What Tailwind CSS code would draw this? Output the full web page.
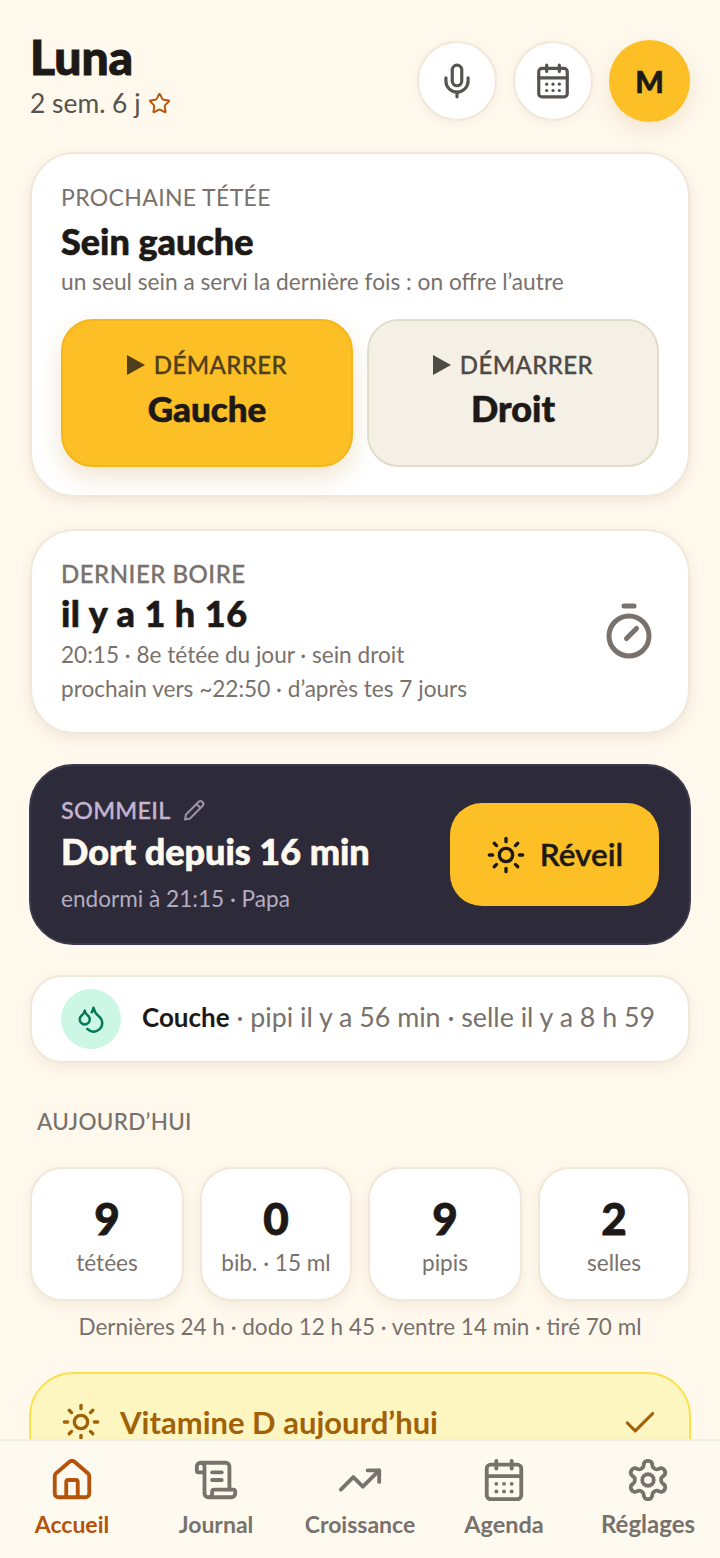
<!DOCTYPE html>
<html lang="fr">
  <head>
    <meta charset="UTF-8">
    <meta name="viewport" content="width=device-width, initial-scale=1.0">
    <title>Luna</title>
    <script src="https://cdn.jsdelivr.net/npm/@tailwindcss/browser@4"></script>
  </head>
  <body class="font-['Lato','Noto_Sans',sans-serif] bg-[#fef8ed] text-[#1c1917] h-[1558px] overflow-hidden relative">

    <main class="px-[30px] pt-[40px] flex flex-col">
      <header class="flex justify-between items-start h-[82px]">
        <div>
          <h1 class="text-[48px] leading-[38px] font-black -mt-[2px] [-webkit-text-stroke:1px_currentColor]">Luna</h1>
          <p class="flex items-center gap-[7px] text-[26.4px] leading-[34px] text-[#57534e] mt-[10px]">2 sem. 6 j
            <svg class="w-[23px] h-[23px] text-[#b45309]" viewBox="0 0 24 24" fill="none" stroke="currentColor" stroke-width="2" stroke-linecap="round" stroke-linejoin="round"><path d="M11.525 2.295a.53.53 0 0 1 .95 0l2.31 4.679a2.123 2.123 0 0 0 1.595 1.16l5.166.756a.53.53 0 0 1 .294.904l-3.736 3.638a2.123 2.123 0 0 0-.611 1.878l.882 5.14a.53.53 0 0 1-.771.56l-4.618-2.428a2.122 2.122 0 0 0-1.973 0L6.396 21.01a.53.53 0 0 1-.77-.56l.881-5.139a2.122 2.122 0 0 0-.611-1.879L2.16 9.795a.53.53 0 0 1 .294-.906l5.165-.755a2.122 2.122 0 0 0 1.597-1.16z"/></svg>
          </p>
        </div>
        <div class="flex items-center gap-[16px] h-[82px]">
          <button class="w-[80px] h-[80px] rounded-full bg-white border-2 border-[#f0e8d8] shadow-[0_2px_8px_rgba(120,90,30,0.06)] flex items-center justify-center text-[#57534e]" aria-label="Micro">
            <svg class="w-[38px] h-[38px]" viewBox="0 0 24 24" fill="none" stroke="currentColor" stroke-width="2" stroke-linecap="round" stroke-linejoin="round"><path d="M12 19v3"/><path d="M19 10v2a7 7 0 0 1-14 0v-2"/><rect x="9" y="2" width="6" height="13" rx="3"/></svg>
          </button>
          <button class="w-[80px] h-[80px] rounded-full bg-white border-2 border-[#f0e8d8] shadow-[0_2px_8px_rgba(120,90,30,0.06)] flex items-center justify-center text-[#57534e]" aria-label="Agenda">
            <svg class="w-[38px] h-[38px]" viewBox="0 0 24 24" fill="none" stroke="currentColor" stroke-width="2" stroke-linecap="round" stroke-linejoin="round"><path d="M8 2v4"/><path d="M16 2v4"/><rect width="18" height="18" x="3" y="4" rx="2"/><path d="M3 10h18"/><path d="M8 14h.01"/><path d="M12 14h.01"/><path d="M16 14h.01"/><path d="M8 18h.01"/><path d="M12 18h.01"/><path d="M16 18h.01"/></svg>
          </button>
          <div class="w-[81px] h-[82px] rounded-full bg-[#fcbf26] shadow-[0_8px_20px_rgba(180,120,20,0.14)] flex items-center justify-center text-[30px] font-black [-webkit-text-stroke:0.6px_currentColor]">M</div>
        </div>
      </header>

      <section class="mt-[30px] h-[345px] bg-white border-2 border-[#f0e8d8] rounded-[44px] shadow-[0_4px_12px_rgba(120,90,30,0.1)] px-[29px] pt-[28px]">
        <p class="text-[23px] leading-[30px] tracking-[0.36px] text-[#78716c]">PROCHAINE TÉTÉE</p>
        <h2 class="text-[36px] leading-[44px] font-black mt-[7px] [-webkit-text-stroke:0.6px_currentColor]">Sein gauche</h2>
        <p class="text-[22.7px] leading-[30px] text-[#78716c] mt-[4px]">un seul sein a servi la dernière fois : on offre l’autre</p>
        <div class="grid grid-cols-[292px_292px] gap-[14px] mt-[22px]">
          <button class="h-[148px] rounded-[32px] bg-[#fcbf26] border-2 border-[#f5b619] shadow-[0_10px_24px_rgba(180,120,20,0.2)] flex flex-col items-center justify-center">
            <span class="flex items-center gap-[9px] text-[24px] leading-[30px] tracking-[0.4px] font-medium text-[#4f3f1c] [-webkit-text-stroke:0.3px_currentColor]"><svg class="w-[18px] h-[20px]" viewBox="0 0 18 20" fill="currentColor"><path d="M0 0l18 10-18 10z"/></svg>DÉMARRER</span>
            <span class="text-[35px] leading-[44px] font-black mt-[6px] mb-[6px] [-webkit-text-stroke:0.6px_currentColor]">Gauche</span>
          </button>
          <button class="h-[148px] rounded-[32px] bg-[#f5f0e6] border-2 border-[#e3dccb] flex flex-col items-center justify-center">
            <span class="flex items-center gap-[9px] text-[24px] leading-[30px] tracking-[0.4px] font-medium text-[#4e4a44] [-webkit-text-stroke:0.3px_currentColor]"><svg class="w-[18px] h-[20px]" viewBox="0 0 18 20" fill="currentColor"><path d="M0 0l18 10-18 10z"/></svg>DÉMARRER</span>
            <span class="text-[36px] leading-[44px] font-black mt-[6px] mb-[6px] [-webkit-text-stroke:0.6px_currentColor]">Droit</span>
          </button>
        </div>
      </section>

      <section class="mt-[32px] h-[205px] bg-white border-2 border-[#f0e8d8] rounded-[44px] shadow-[0_4px_12px_rgba(120,90,30,0.1)] px-[29px] pt-[28px] flex justify-between items-center">
        <div class="self-start">
          <p class="text-[24px] leading-[30px] tracking-[0.5px] font-medium text-[#78716c] [-webkit-text-stroke:0.3px_currentColor]">DERNIER BOIRE</p>
          <h2 class="text-[36px] leading-[44px] tracking-[0.5px] font-black mt-[2px] [-webkit-text-stroke:0.6px_currentColor]">il y a 1 h 16</h2>
          <p class="text-[22.6px] leading-[34px] text-[#78716c] mt-[3px]">20:15 · 8e tétée du jour · sein droit</p>
          <p class="text-[22.6px] leading-[34px] text-[#78716c]">prochain vers ~22:50 · d’après tes 7 jours</p>
        </div>
        <svg class="w-[60px] h-[60px] text-[#78716c] -mt-[29px]" viewBox="0 0 24 24" fill="none" stroke="currentColor" stroke-width="2" stroke-linecap="round" stroke-linejoin="round"><line x1="10" x2="14" y1="2" y2="2"/><line x1="11" x2="15" y1="15" y2="11"/><circle cx="12" cy="14" r="8"/></svg>
      </section>

      <section class="-mx-[1px] mt-[30px] h-[181px] bg-[#2d2a3a] border-2 border-[#3e3a4e] rounded-[44px] pl-[30px] pr-[30px] flex justify-between items-center">
        <div>
          <p class="flex items-center gap-[11px] text-[23.5px] leading-[30px] tracking-[0.25px] font-medium text-[#c4b5d0] [-webkit-text-stroke:0.3px_currentColor]">SOMMEIL
            <svg class="w-[24px] h-[24px] text-[#9b93a8] [-webkit-text-stroke:0]" viewBox="0 0 24 24" fill="none" stroke="currentColor" stroke-width="2" stroke-linecap="round" stroke-linejoin="round"><path d="M16.5 4a2.8 2.8 0 0 1 4 4L8 20.5 3 21.5 4 16.5z"/><path d="m14.5 6 3.5 3.5"/></svg>
          </p>
          <h2 class="text-[36px] leading-[44px] font-black text-[#fef9ee] mt-[4px] [-webkit-text-stroke:0.6px_currentColor]">Dort depuis 16 min</h2>
          <p class="text-[22.6px] leading-[30px] text-[#b4adc0] mt-[11px]">endormi à 21:15 · Papa</p>
        </div>
        <button class="w-[209px] h-[103px] rounded-[32px] bg-[#fcbf26] flex items-center justify-center gap-[14px] text-[31.5px] font-semibold [-webkit-text-stroke:0.4px_currentColor]">
          <svg class="w-[40px] h-[40px]" viewBox="0 0 24 24" fill="none" stroke="currentColor" stroke-width="2" stroke-linecap="round" stroke-linejoin="round"><circle cx="12" cy="12" r="4"/><path d="M12 2v2"/><path d="M12 20v2"/><path d="m4.93 4.93 1.41 1.41"/><path d="m17.66 17.66 1.41 1.41"/><path d="M2 12h2"/><path d="M20 12h2"/><path d="m6.34 17.66-1.41 1.41"/><path d="m19.07 4.93-1.41 1.41"/></svg>
          Réveil
        </button>
      </section>

      <section class="mt-[30px] h-[88px] bg-white border-2 border-[#f0e8d8] rounded-[32px] shadow-[0_4px_12px_rgba(120,90,30,0.08)] pl-[29px] flex items-center gap-[21px]">
        <span class="w-[60px] h-[60px] rounded-full bg-[#ccf7e4] flex items-center justify-center text-[#047857] shrink-0">
          <svg class="w-[30px] h-[30px]" viewBox="0 0 24 24" fill="none" stroke="currentColor" stroke-width="2" stroke-linecap="round" stroke-linejoin="round"><path d="M7 16.3c2.2 0 4-1.83 4-4.05 0-1.16-.57-2.26-1.71-3.19S7.29 6.75 7 5.3c-.29 1.45-1.14 2.84-2.29 3.76S3 11.1 3 12.25c0 2.22 1.8 4.05 4 4.05z"/><path d="M12.56 6.6A10.97 10.97 0 0 0 14 3.02c.5 2.5 2 4.9 4 6.5s3 3.5 3 5.5a6.98 6.98 0 0 1-11.91 4.97"/></svg>
        </span>
        <p class="text-[26.8px] whitespace-nowrap text-[#78716c] -mt-[4px]"><strong class="text-[26px] font-bold text-[#1c1917]">Couche</strong> · pipi il y a 56 min · selle il y a 8 h 59</p>
      </section>

      <h3 class="mt-[44px] ml-[7px] text-[22.5px] leading-[30px] tracking-[0.3px] font-medium text-[#78716c]">AUJOURD’HUI</h3>

      <section class="mt-[30px] grid grid-cols-[154px_152px_154px_152px] gap-[16px]">
        <div class="h-[134px] bg-white border-2 border-[#f0e8d8] rounded-[32px] shadow-[0_4px_12px_rgba(120,90,30,0.08)] flex flex-col items-center pt-[25px]"><b class="text-[44px] leading-[48px] font-black [-webkit-text-stroke:0.8px_currentColor]">9</b><span class="text-[22.6px] leading-[28px] text-[#78716c] mt-[7px]">tétées</span></div>
        <div class="h-[134px] bg-white border-2 border-[#f0e8d8] rounded-[32px] shadow-[0_4px_12px_rgba(120,90,30,0.08)] flex flex-col items-center pt-[25px]"><b class="text-[44px] leading-[48px] font-black [-webkit-text-stroke:0.8px_currentColor]">0</b><span class="text-[22.6px] leading-[28px] text-[#78716c] mt-[7px] whitespace-nowrap">bib. · 15 ml</span></div>
        <div class="h-[134px] bg-white border-2 border-[#f0e8d8] rounded-[32px] shadow-[0_4px_12px_rgba(120,90,30,0.08)] flex flex-col items-center pt-[25px]"><b class="text-[44px] leading-[48px] font-black [-webkit-text-stroke:0.8px_currentColor]">9</b><span class="text-[22.6px] leading-[28px] text-[#78716c] mt-[7px]">pipis</span></div>
        <div class="h-[134px] bg-white border-2 border-[#f0e8d8] rounded-[32px] shadow-[0_4px_12px_rgba(120,90,30,0.08)] flex flex-col items-center pt-[25px]"><b class="text-[44px] leading-[48px] font-black [-webkit-text-stroke:0.8px_currentColor]">2</b><span class="text-[22.6px] leading-[28px] text-[#78716c] mt-[7px]">selles</span></div>
      </section>

      <p class="mt-[11px] text-center text-[22.5px] leading-[30px] text-[#78716c]">Dernières 24 h · dodo 12 h 45 · ventre 14 min · tiré 70 ml</p>

      <section class="-mx-[1px] mt-[30px] h-[120px] bg-[#fef6c0] border-2 border-[#fbe04a] rounded-[44px] pl-[30px] pr-[30px] pt-[28px] flex justify-between items-start text-[#a16207]">
        <div class="flex items-center gap-[19px]">
          <svg class="w-[40px] h-[40px]" viewBox="0 0 24 24" fill="none" stroke="currentColor" stroke-width="2" stroke-linecap="round" stroke-linejoin="round"><circle cx="12" cy="12" r="4"/><path d="M12 2v2"/><path d="M12 20v2"/><path d="m4.93 4.93 1.41 1.41"/><path d="m17.66 17.66 1.41 1.41"/><path d="M2 12h2"/><path d="M20 12h2"/><path d="m6.34 17.66-1.41 1.41"/><path d="m19.07 4.93-1.41 1.41"/></svg>
          <span class="text-[31px] leading-[38px] font-bold">Vitamine D aujourd’hui</span>
        </div>
        <svg class="w-[38px] h-[38px] mt-[2px]" viewBox="0 0 24 24" fill="none" stroke="currentColor" stroke-width="2" stroke-linecap="round" stroke-linejoin="round"><path d="M20 6 9 17l-5-5"/></svg>
      </section>
    </main>

    <nav class="absolute bottom-0 inset-x-0 h-[119px] bg-[#fefaf0] border-t-2 border-[#f3ece0] grid grid-cols-5 text-[#78716c]">
      <a class="flex flex-col items-center pt-[16px] text-[#b45309]">
        <svg class="w-[46px] h-[46px]" viewBox="0 0 24 24" fill="none" stroke="currentColor" stroke-width="2" stroke-linecap="round" stroke-linejoin="round"><path d="M15 21v-8a1 1 0 0 0-1-1h-4a1 1 0 0 0-1 1v8"/><path d="M3 10a2 2 0 0 1 .709-1.528l7-5.999a2 2 0 0 1 2.582 0l7 5.999A2 2 0 0 1 21 10v9a2 2 0 0 1-2 2H5a2 2 0 0 1-2-2z"/></svg>
        <span class="text-[23px] leading-[30px] font-bold mt-[6px]">Accueil</span>
      </a>
      <a class="flex flex-col items-center pt-[16px]">
        <svg class="w-[46px] h-[46px]" viewBox="0 0 24 24" fill="none" stroke="currentColor" stroke-width="2" stroke-linecap="round" stroke-linejoin="round"><path d="M15 12h-5"/><path d="M15 8h-5"/><path d="M19 17V5a2 2 0 0 0-2-2H4"/><path d="M8 21h12a2 2 0 0 0 2-2v-1a1 1 0 0 0-1-1H11a1 1 0 0 0-1 1v1a2 2 0 1 1-4 0V5a2 2 0 1 0-4 0v2a1 1 0 0 0 1 1h3"/></svg>
        <span class="text-[23px] leading-[30px] font-bold mt-[6px]">Journal</span>
      </a>
      <a class="flex flex-col items-center pt-[16px]">
        <svg class="w-[46px] h-[46px]" viewBox="0 0 24 24" fill="none" stroke="currentColor" stroke-width="2" stroke-linecap="round" stroke-linejoin="round"><path d="M16 7h6v6"/><path d="m22 7-8.5 8.5-5-5L2 17"/></svg>
        <span class="text-[23px] leading-[30px] font-bold mt-[6px]">Croissance</span>
      </a>
      <a class="flex flex-col items-center pt-[16px]">
        <svg class="w-[46px] h-[46px]" viewBox="0 0 24 24" fill="none" stroke="currentColor" stroke-width="2" stroke-linecap="round" stroke-linejoin="round"><path d="M8 2v4"/><path d="M16 2v4"/><rect width="18" height="18" x="3" y="4" rx="2"/><path d="M3 10h18"/><path d="M8 14h.01"/><path d="M12 14h.01"/><path d="M16 14h.01"/><path d="M8 18h.01"/><path d="M12 18h.01"/><path d="M16 18h.01"/></svg>
        <span class="text-[23.5px] leading-[30px] font-bold mt-[6px]">Agenda</span>
      </a>
      <a class="flex flex-col items-center pt-[16px]">
        <svg class="w-[46px] h-[46px]" viewBox="0 0 24 24" fill="none" stroke="currentColor" stroke-width="2" stroke-linecap="round" stroke-linejoin="round"><path d="M12.22 2h-.44a2 2 0 0 0-2 2v.18a2 2 0 0 1-1 1.73l-.43.25a2 2 0 0 1-2 0l-.15-.08a2 2 0 0 0-2.73.73l-.22.38a2 2 0 0 0 .73 2.73l.15.1a2 2 0 0 1 1 1.72v.51a2 2 0 0 1-1 1.74l-.15.09a2 2 0 0 0-.73 2.73l.22.38a2 2 0 0 0 2.73.73l.15-.08a2 2 0 0 1 2 0l.43.25a2 2 0 0 1 1 1.73V20a2 2 0 0 0 2 2h.44a2 2 0 0 0 2-2v-.18a2 2 0 0 1 1-1.73l.43-.25a2 2 0 0 1 2 0l.15.08a2 2 0 0 0 2.73-.73l.22-.39a2 2 0 0 0-.73-2.73l-.15-.08a2 2 0 0 1-1-1.74v-.5a2 2 0 0 1 1-1.74l.15-.09a2 2 0 0 0 .73-2.73l-.22-.38a2 2 0 0 0-2.73-.73l-.15.08a2 2 0 0 1-2 0l-.43-.25a2 2 0 0 1-1-1.73V4a2 2 0 0 0-2-2z"/><circle cx="12" cy="12" r="3"/></svg>
        <span class="text-[24px] leading-[30px] font-bold mt-[6px]">Réglages</span>
      </a>
    </nav>
  </body>
</html>
